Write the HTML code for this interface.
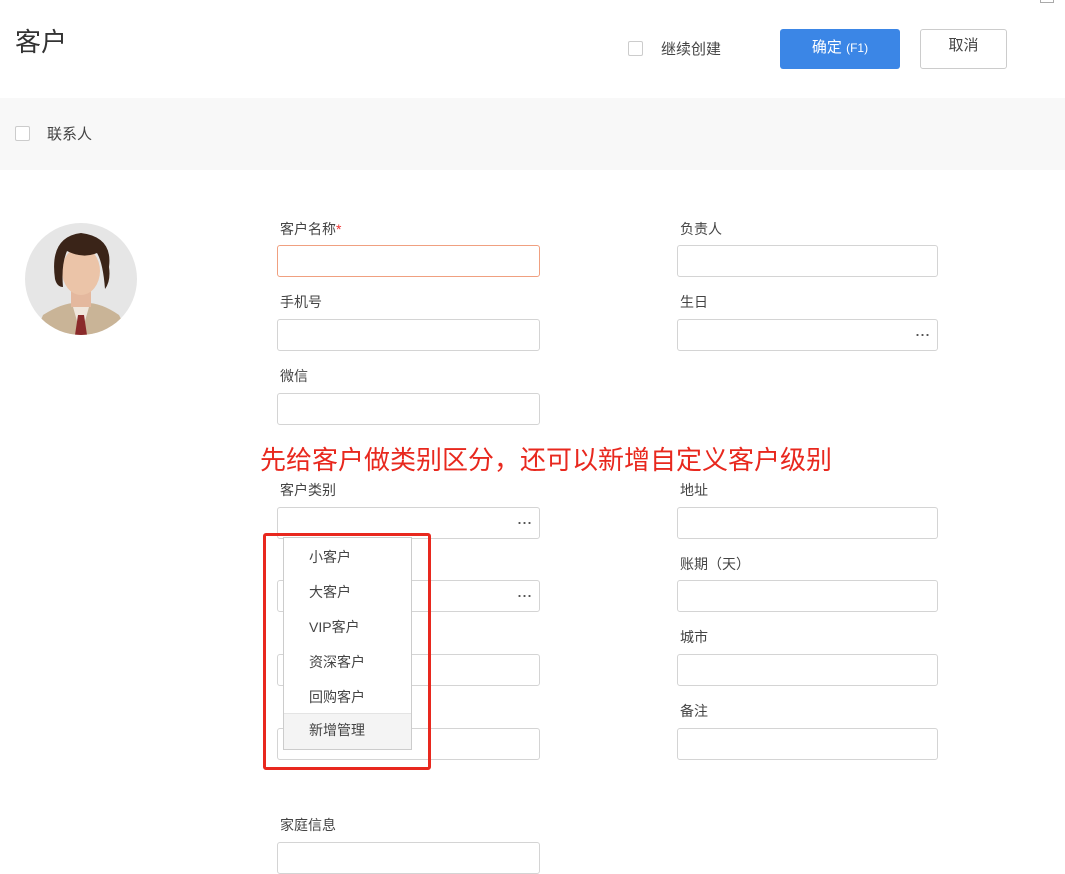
<!DOCTYPE html>
<html><head><meta charset="utf-8"><style>
*{box-sizing:border-box;margin:0;padding:0}
body{width:1065px;height:867px;overflow:hidden;background:#fff;font-family:"Liberation Sans","Noto Sans CJK SC",sans-serif;color:#333;position:relative}
.a{position:absolute}
.lbl{position:absolute;font-size:14px;color:#444;line-height:16px}
.in{position:absolute;width:263px;height:32px;border:1px solid #d4d4d4;border-radius:3px;background:#fff}
.dots{position:absolute;right:8px;top:14px;width:14px;height:2px;background:radial-gradient(circle,#555 1px,transparent 1.2px) 0 0/5px 2px repeat-x}
.cb{position:absolute;width:15px;height:15px;border:1px solid #ccc;border-radius:2px;background:#fff}
.it{position:absolute;left:25px;font-size:14px;color:#444}
</style></head><body>
<div class="a" style="left:15px;top:26px;font-size:26px;color:#333;line-height:32px">客户</div>
<div class="cb" style="left:628px;top:41px"></div>
<div class="a" style="left:661px;top:38px;font-size:15px;color:#444">继续创建</div>
<div class="a" style="left:780px;top:29px;width:120px;height:40px;background:#3b86e6;border-radius:3px;color:#fff;font-size:15px;text-align:center;line-height:38px">确定 <span style="font-size:12px">(F1)</span></div>
<div class="a" style="left:920px;top:29px;width:87px;height:40px;border:1px solid #ccc;border-radius:3px;color:#444;font-size:15px;text-align:center;line-height:32px">取消</div>
<div class="a" style="left:1040px;top:0;width:14px;height:3px;border:1px solid #aaa;border-top:none"></div>
<div class="a" style="left:0;top:98px;width:1065px;height:72px;background:#f8f8f8"></div>
<div class="cb" style="left:15px;top:126px"></div>
<div class="a" style="left:47px;top:123px;font-size:15px;color:#444">联系人</div>

<svg class="a" style="left:25px;top:223px" width="112" height="112" viewBox="0 0 112 112">
<defs><clipPath id="c"><circle cx="56" cy="56" r="56"/></clipPath></defs>
<g clip-path="url(#c)">
<rect width="112" height="112" fill="#e6e6e6"/>
<path d="M10 112 L18 92 Q40 78 56 80 Q74 78 94 92 L104 112Z" fill="#c9b497"/>
<path d="M48 84 L56 112 L64 84Z" fill="#f0e6dc"/>
<path d="M53 92 L59 92 L62 112 L50 112Z" fill="#8a2a2a"/>
<rect x="46" y="60" width="20" height="24" fill="#e4b89e"/>
<ellipse cx="56" cy="48" rx="19" ry="24" fill="#ebc4a8"/>
<path d="M30 56 Q24 14 56 10 Q88 14 84 44 Q86 58 80 66 Q78 40 72 30 Q58 36 42 28 Q36 42 38 64 Q32 64 30 56Z" fill="#3a2418"/>
</g></svg>

<div class="lbl" style="left:280px;top:221px">客户名称<span style="color:#e33">*</span></div>
<div class="in" style="left:277px;top:245px;border-color:#f0a080"></div>
<div class="lbl" style="left:280px;top:294px">手机号</div>
<div class="in" style="left:277px;top:319px"></div>
<div class="lbl" style="left:280px;top:368px">微信</div>
<div class="in" style="left:277px;top:393px"></div>

<div class="lbl" style="left:680px;top:221px">负责人</div>
<div class="in" style="left:677px;top:245px;width:261px"></div>
<div class="lbl" style="left:680px;top:294px">生日</div>
<div class="in" style="left:677px;top:319px;width:261px"><span class="dots"></span></div>

<div class="a" style="left:260px;top:444px;font-size:26px;color:#e8281e;line-height:32px;white-space:nowrap">先给客户做类别区分，还可以新增自定义客户级别</div>

<div class="lbl" style="left:280px;top:482px">客户类别</div>
<div class="in" style="left:277px;top:507px"><span class="dots"></span></div>
<div class="in" style="left:277px;top:580px"><span class="dots"></span></div>
<div class="in" style="left:277px;top:654px"></div>
<div class="in" style="left:277px;top:728px"></div>

<div class="lbl" style="left:680px;top:482px">地址</div>
<div class="in" style="left:677px;top:507px;width:261px"></div>
<div class="lbl" style="left:680px;top:556px">账期（天）</div>
<div class="in" style="left:677px;top:580px;width:261px"></div>
<div class="lbl" style="left:680px;top:629px">城市</div>
<div class="in" style="left:677px;top:654px;width:261px"></div>
<div class="lbl" style="left:680px;top:703px">备注</div>
<div class="in" style="left:677px;top:728px;width:261px"></div>

<div class="lbl" style="left:280px;top:817px">家庭信息</div>
<div class="in" style="left:277px;top:842px"></div>

<div class="a" style="left:283px;top:537px;width:129px;height:213px;background:#fff;border:1px solid #ccc">
<div class="it" style="top:9px">小客户</div>
<div class="it" style="top:44px">大客户</div>
<div class="it" style="top:79px">VIP客户</div>
<div class="it" style="top:114px">资深客户</div>
<div class="it" style="top:149px">回购客户</div>
<div class="a" style="left:0;top:175px;width:127px;height:36px;background:#f4f4f4;border-top:1px solid #e4e4e4"></div>
<div class="it" style="top:182px">新增管理</div>
</div>
<div class="a" style="left:263px;top:533px;width:168px;height:237px;border:3px solid #e8281e;border-radius:3px"></div>
</body></html>
